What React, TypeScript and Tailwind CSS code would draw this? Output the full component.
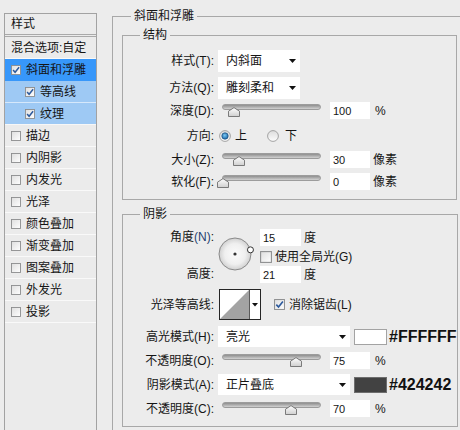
import React from "react";

const FONT = "font-['Liberation_Sans','Noto_Sans_CJK_SC',sans-serif]";

function CheckBox({ checked = false, size = 10 }: { checked?: boolean; size?: number }) {
  return (
    <svg width={size} height={size} viewBox="0 0 10 10" className="shrink-0">
      <defs>
        <linearGradient id="cbFill" x1="0" y1="0" x2="1" y2="1">
          <stop offset="0" stopColor="#dedede" />
          <stop offset="1" stopColor="#ffffff" />
        </linearGradient>
      </defs>
      <rect x="0.5" y="0.5" width="9" height="9" fill="url(#cbFill)" stroke="#8c8d8e" strokeWidth="0.9" />
      {checked && (
        <path d="M2.1 5.1 L4.1 7.3 L8.1 2.3" fill="none" stroke="#2d5a9c" strokeWidth="1.5" />
      )}
    </svg>
  );
}

function Radio({ on = false }: { on?: boolean }) {
  return (
    <svg width="12" height="12" viewBox="0 0 12 12" className="shrink-0">
      <defs>
        <linearGradient id="rdFill" x1="0" y1="0" x2="0" y2="1">
          <stop offset="0" stopColor="#dcdcdc" />
          <stop offset="1" stopColor="#fdfdfd" />
        </linearGradient>
        <radialGradient id="rdDot" cx="0.45" cy="0.4" r="0.6">
          <stop offset="0" stopColor="#7cc8f2" />
          <stop offset="1" stopColor="#1766a8" />
        </radialGradient>
      </defs>
      <circle cx="6" cy="6" r="5.4" fill="url(#rdFill)" stroke="#9b9b9b" strokeWidth="0.9" />
      {on && <circle cx="6" cy="6" r="3.2" fill="url(#rdDot)" stroke="#1d4f7c" strokeWidth="0.7" />}
    </svg>
  );
}

function DownArrow() {
  return (
    <svg width="7" height="4" viewBox="0 0 7 4" className="shrink-0">
      <polygon points="0,0 7,0 3.5,4" fill="#111" />
    </svg>
  );
}

function Label({ children }: { children: React.ReactNode }) {
  return <div className="w-[91px] shrink-0 text-right whitespace-nowrap">{children}</div>;
}

function Select({ value, width, height }: { value: string; width: string; height: string }) {
  return (
    <div className={`ml-[4px] ${width} ${height} shrink-0 bg-white flex items-center justify-between pl-[8px] pr-[4px]`}>
      <span>{value}</span>
      <DownArrow />
    </div>
  );
}

function Field({ value, width = "w-[40px]" }: { value: string; width?: string }) {
  return (
    <div className={`${width} h-[17px] shrink-0 bg-white flex items-center pl-[3px] text-[11px]`}>{value}</div>
  );
}

function Slider({ pct }: { pct: number }) {
  return (
    <div className="relative ml-[8px] w-[99px] h-[17px] shrink-0">
      <div className="mt-[2px] h-[6px] rounded-full border border-[#9c9c9c] bg-linear-to-b from-[#8f8f8f] to-[#d2d2d2]" />
      <svg
        width="12"
        height="10"
        viewBox="0 0 12 10"
        className="absolute top-[5px]"
        style={{ left: `${1 + pct * 97 - 6}px` }}
      >
        <defs>
          <linearGradient id="thumbFill" x1="0" y1="0" x2="0" y2="1">
            <stop offset="0" stopColor="#ffffff" />
            <stop offset="1" stopColor="#cfcfcf" />
          </linearGradient>
        </defs>
        <path d="M0.5 4.2 L6 0.6 L11.5 4.2 L11.5 9.5 L0.5 9.5 Z" fill="url(#thumbFill)" stroke="#6e6e6e" strokeWidth="0.9" />
      </svg>
    </div>
  );
}

function SliderRow({
  label,
  pct,
  value,
  unit,
  top,
}: {
  label: React.ReactNode;
  pct: number;
  value: string;
  unit: string;
  top: string;
}) {
  return (
    <div className={`flex items-center h-[17px] ${top}`}>
      <Label>{label}</Label>
      <Slider pct={pct} />
      <div className="ml-[9px]">
        <Field value={value} />
      </div>
      <span className={unit === "%" ? "ml-[5px]" : "ml-[3px]"}>{unit}</span>
    </div>
  );
}

function AngleDial() {
  const a = (15 * Math.PI) / 180;
  return (
    <svg width="34" height="34" viewBox="0 0 34 34" className="overflow-visible">
      <defs>
        <radialGradient id="dialFill" cx="0.5" cy="0.5" r="0.5">
          <stop offset="0" stopColor="#fbfbfb" />
          <stop offset="0.65" stopColor="#efefef" />
          <stop offset="1" stopColor="#d0d0d0" />
        </radialGradient>
      </defs>
      <circle cx="17" cy="17" r="16" fill="url(#dialFill)" stroke="#8a8a8a" />
      <circle cx="17" cy="17" r="1.6" fill="#333" />
      <circle cx={17 + 16 * Math.cos(a)} cy={17 - 16 * Math.sin(a)} r="3" fill="#fff" stroke="#333" strokeWidth="1" />
    </svg>
  );
}

function ContourPicker() {
  return (
    <svg width="42" height="31" viewBox="0 0 42 31" className="ml-[5px] shrink-0">
      <rect x="0.5" y="0.5" width="41" height="30" fill="#fff" stroke="#262626" />
      <polygon points="1,30 30,1 30,30" fill="#a3a3a3" />
      <line x1="30.5" y1="1" x2="30.5" y2="30" stroke="#5a5a5a" />
      <polygon points="33,14 39,14 36,17.5" fill="#111" />
    </svg>
  );
}

type SideItem = { label: string; checked?: boolean; box?: boolean; indent?: boolean; tone?: "sel" | "sub" | "subLast" };

const sideItems: SideItem[] = [
  { label: "混合选项:自定", box: false },
  { label: "斜面和浮雕", checked: true, tone: "sel" },
  { label: "等高线", checked: true, indent: true, tone: "sub" },
  { label: "纹理", checked: true, indent: true, tone: "subLast" },
  { label: "描边" },
  { label: "内阴影" },
  { label: "内发光" },
  { label: "光泽" },
  { label: "颜色叠加" },
  { label: "渐变叠加" },
  { label: "图案叠加" },
  { label: "外发光" },
  { label: "投影" },
];

function SideRow({ item }: { item: SideItem }) {
  const tone =
    item.tone === "sel"
      ? "bg-[#3797fa] border-[#3797fa]"
      : item.tone === "sub"
        ? "bg-[#9ec9f4] border-[#d6e8fb]"
        : item.tone === "subLast"
          ? "bg-[#9ec9f4] border-[#f7f7f7]"
          : "border-[#f9f9f9]";
  const pad = item.indent ? "pl-[20px]" : "pl-[6px]";
  return (
    <div className={`flex items-center h-[22px] border-b ${tone} ${pad}`}>
      {item.box !== false && <CheckBox checked={item.checked} />}
      <span className={item.box !== false ? "ml-[5px] whitespace-nowrap" : "whitespace-nowrap"}>{item.label}</span>
    </div>
  );
}

function Sidebar() {
  return (
    <div className="ml-[4px] mt-[13px] w-[93px] h-[440px] shrink-0 border border-[#a2a2a2] bg-[#ebebeb]">
      <div className="h-[23px] flex items-center pl-[6px] border-b-[3px] border-double border-[#a9a9a9]">样式</div>
      {sideItems.map((it) => (
        <SideRow key={it.label} item={it} />
      ))}
    </div>
  );
}

export default function App() {
  return (
    <div
      className={`w-[460px] h-[430px] overflow-hidden bg-[#ececec] flex text-[12px] leading-[16px] text-[#151515] ${FONT}`}
    >
      <Sidebar />
      <div className="ml-[15px] mt-[8px] shrink-0">
        <fieldset className="w-[364px] border border-[#a8a8a8] pb-[30px]">
          <legend className="ml-[18px] px-[3px] leading-[16px]">斜面和浮雕</legend>

          {/* 结构 */}
          <fieldset className="ml-[9px] mt-[3px] w-[335px] border border-[#a8a8a8] pb-[9px]">
            <legend className="ml-[17px] px-[3px] leading-[16px]">结构</legend>

            <div className="flex items-center h-[22px] mt-[7px]">
              <Label>样式(T):</Label>
              <Select value="内斜面" width="w-[82px]" height="h-[22px]" />
            </div>
            <div className="flex items-center h-[22px] mt-[5px]">
              <Label>方法(Q):</Label>
              <Select value="雕刻柔和" width="w-[82px]" height="h-[22px]" />
            </div>

            <SliderRow label="深度(D):" pct={0.11} value="100" unit="%" top="mt-[3px]" />

            <div className="flex items-center h-[17px] mt-[8px]">
              <Label>方向:</Label>
              <div className="ml-[5px] flex items-center">
                <Radio on />
                <span className="ml-[4px]">上</span>
                <div className="ml-[20px]">
                  <Radio />
                </div>
                <span className="ml-[6px]">下</span>
              </div>
            </div>

            <SliderRow label="大小(Z):" pct={0.17} value="30" unit="像素" top="mt-[7px]" />
            <SliderRow label="软化(F):" pct={0} value="0" unit="像素" top="mt-[5px]" />
          </fieldset>

          {/* 阴影 */}
          <fieldset className="ml-[9px] mt-[6px] w-[335px] border border-[#a8a8a8] pb-[9px]">
            <legend className="ml-[17px] px-[3px] leading-[16px]">阴影</legend>

            <div className="flex mt-[7px]">
              <div className="w-[91px] h-[54px] shrink-0 flex flex-col justify-between text-right">
                <div className="h-[17px] leading-[17px]">
                  角度<span className="text-[#1f3e70]">(N)</span>:
                </div>
                <div className="h-[17px] leading-[17px]">高度:</div>
              </div>
              <div className="ml-[4px] mt-[8px] shrink-0">
                <AngleDial />
              </div>
              <div className="ml-[8px] flex flex-col">
                <div className="flex items-center h-[17px]">
                  <Field value="15" width="w-[41px]" />
                  <span className="ml-[3px]">度</span>
                </div>
                <div className="flex items-center h-[13px] mt-[4px]">
                  <CheckBox size={12} />
                  <span className="ml-[3px] whitespace-nowrap">使用全局光(G)</span>
                </div>
                <div className="flex items-center h-[17px] mt-[3px]">
                  <Field value="21" width="w-[41px]" />
                  <span className="ml-[3px]">度</span>
                </div>
              </div>
            </div>

            <div className="flex items-center h-[31px] mt-[6px]">
              <Label>光泽等高线:</Label>
              <ContourPicker />
              <div className="ml-[13px]">
                <CheckBox checked size={11} />
              </div>
              <span className="ml-[4px] whitespace-nowrap">消除锯齿(L)</span>
            </div>

            <div className="flex items-center h-[21px] mt-[6px]">
              <Label>高光模式(H):</Label>
              <Select value="亮光" width="w-[132px]" height="h-[21px]" />
              <div className="ml-[4px] w-[33px] h-[16px] shrink-0 bg-white border border-[#a3a3a3]" />
              <span className="ml-[2px] shrink-0 whitespace-nowrap font-bold text-[16px] leading-[18px] text-[#111]">
                #FFFFFF
              </span>
            </div>

            <SliderRow label="不透明度(O):" pct={0.75} value="75" unit="%" top="mt-[5px]" />

            <div className="flex items-center h-[21px] mt-[5px]">
              <Label>阴影模式(A):</Label>
              <Select value="正片叠底" width="w-[132px]" height="h-[21px]" />
              <div className="ml-[4px] w-[33px] h-[16px] shrink-0 bg-[#424242] border border-[#6e6e6e]" />
              <span className="ml-[2px] shrink-0 whitespace-nowrap font-bold text-[16px] leading-[18px] text-[#111]">
                #424242
              </span>
            </div>

            <SliderRow label="不透明度(C):" pct={0.7} value="70" unit="%" top="mt-[5px]" />
          </fieldset>
        </fieldset>
      </div>
    </div>
  );
}
